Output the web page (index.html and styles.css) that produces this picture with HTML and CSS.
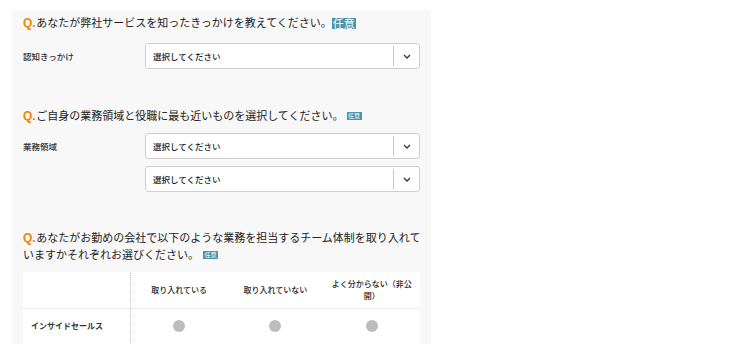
FILE: index.html
```html
<!DOCTYPE html>
<html lang="ja">
<head>
<meta charset="utf-8">
<link rel="stylesheet" href="styles.css">
</head>
<body>
<div class="panel">
  <h2 class="q q1"><span class="qmark">Q.</span>あなたが弊社サービスを知ったきっかけを教えてください。<span class="badge badge-lg">任意</span></h2>
  <div class="field field1">
    <div class="label">認知きっかけ</div>
    <div class="controls">
      <div class="select"><span class="select-text">選択してください</span><span class="select-arrow"><svg width="8" height="5" viewBox="0 0 8 5"><path d="M1 1 L4 4 L7 1" fill="none" stroke="#333" stroke-width="1.3"/></svg></span></div>
    </div>
  </div>

  <h2 class="q q2"><span class="qmark">Q.</span>ご自身の業務領域と役職に最も近いものを選択してください。<span class="badge badge-sm">任意</span></h2>
  <div class="field field2">
    <div class="label">業務領域</div>
    <div class="controls">
      <div class="select"><span class="select-text">選択してください</span><span class="select-arrow"><svg width="8" height="5" viewBox="0 0 8 5"><path d="M1 1 L4 4 L7 1" fill="none" stroke="#333" stroke-width="1.3"/></svg></span></div>
      <div class="select"><span class="select-text">選択してください</span><span class="select-arrow"><svg width="8" height="5" viewBox="0 0 8 5"><path d="M1 1 L4 4 L7 1" fill="none" stroke="#333" stroke-width="1.3"/></svg></span></div>
    </div>
  </div>

  <h2 class="q q3"><span class="qmark">Q.</span>あなたがお勤めの会社で以下のような業務を担当するチーム体制を取り入れて<br>いますかそれぞれお選びください。<span class="badge badge-sm badge-q3">任意</span></h2>
  <div class="matrix">
    <div class="mrow mhead">
      <div class="mcell mlabel"></div>
      <div class="mcell">取り入れている</div>
      <div class="mcell">取り入れていない</div>
      <div class="mcell">よく分からない（非公開）</div>
    </div>
    <div class="mrow mbody">
      <div class="mcell mlabel">インサイドセールス</div>
      <div class="mcell"><span class="radio"></span></div>
      <div class="mcell"><span class="radio"></span></div>
      <div class="mcell"><span class="radio"></span></div>
    </div>
  </div>
</div>
</body>
</html>
```

FILE: styles.css
```css
* { box-sizing: border-box; }
html, body { margin: 0; padding: 0; background: #fff; }
body {
  font-family: "Noto Sans CJK JP", "Noto Sans", sans-serif;
  color: #333;
}
.panel {
  margin: 10px 0 0 12px;
  width: 419px;
  height: 334px;
  overflow: hidden;
  background: #f8f8f8;
  padding: 4px 11px 0 11px;
}
.q {
  margin: 0;
  font-size: 11px;
  line-height: 16px;
  font-weight: 400;
  color: #222;
}
.q1, .q2 { height: 16px; }
.q2 { margin-top: 38px; }
.q3 {
  line-height: 17px;
  height: 34px;
  margin-top: 37px;
  margin-right: -6px;
}
.qmark {
  font-family: "Liberation Sans", Arial, sans-serif;
  color: #f08300;
  font-weight: bold;
  font-size: 12px;
  line-height: 1;
  margin-right: 0.5px;
}
.badge {
  display: inline-block;
  background: #4b95a8;
  color: #fff;
  vertical-align: middle;
}
.badge-lg {
  font-size: 11px;
  line-height: 11px;
  padding: 0 1px;
  position: relative;
  top: -1px;
}
.badge-sm {
  font-size: 6px;
  line-height: 8px;
  padding: 0 1.5px;
  margin-left: 3px;
  position: relative;
  top: -1px;
}
.badge-q3 { margin-left: 4px; }
.field { display: flex; }
.field1 { margin-top: 13px; }
.field2 { margin-top: 10px; }
.label {
  width: 122px;
  font-size: 8.5px;
  line-height: 26px;
  color: #333;
  font-weight: 500;
}
.controls { display: flex; flex-direction: column; gap: 7px; }
.select {
  width: 275px;
  height: 26px;
  background: #fff;
  border: 1px solid #cfcfcf;
  border-radius: 3px;
  display: flex;
  align-items: center;
}
.select-text {
  flex: 1;
  padding-left: 7px;
  font-size: 8.5px;
  color: #1a1a1a;
  font-weight: 500;
}
.select-arrow {
  width: 26px;
  height: 20px;
  border-left: 1px solid #c8c8c8;
  display: flex;
  align-items: center;
  justify-content: center;
}
.select-arrow svg { display: block; }
.matrix {
  margin-top: 9px;
  background: #fff;
  border-radius: 3px;
  width: 397px;
}
.mrow {
  display: grid;
  grid-template-columns: 108px 1fr 1fr 1fr;
}
.mhead {
  height: 37px;
  border-bottom: 1px solid #ececec;
}
.mbody { height: 40px; }
.mcell {
  display: flex;
  align-items: center;
  justify-content: center;
  text-align: center;
  font-size: 8px;
  line-height: 12px;
  padding: 0 8px;
  color: #222;
  font-weight: 500;
}
.mbody .mcell { padding-bottom: 6px; }
.mlabel {
  justify-content: flex-start;
  text-align: left;
  border-right: 1px dotted #c8c8c8;
  font-weight: bold;
  color: #333;
}
.radio {
  display: block;
  width: 12px;
  height: 12px;
  border-radius: 50%;
  background: #bdbdbd;
}
```
